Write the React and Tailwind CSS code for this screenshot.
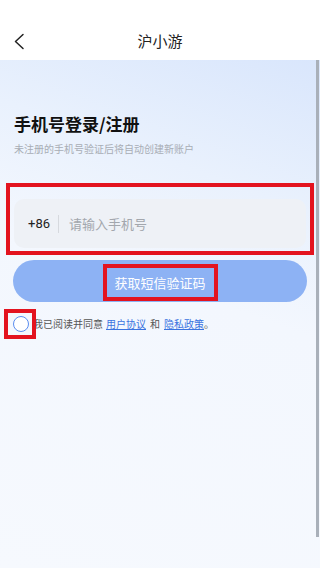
import React from "react";

export default function App() {
  const font = { fontFamily: '"Noto Sans CJK SC", "Noto Sans", Roboto, sans-serif' };
  return (
    <div
      className="relative w-[320px] h-[568px] overflow-hidden flex flex-col bg-white"
      style={font}
    >
      {/* Header */}
      <div className="h-[60px] bg-white shrink-0">
        <div className="relative mt-[26px] h-[30px] flex items-center justify-center">
          <svg
            className="absolute left-[13px] top-[7px]"
            width="12"
            height="17"
            viewBox="0 0 12 17"
            fill="none"
          >
            <path d="M10 1.5 L2.5 8.5 L10 15.5" stroke="#222" strokeWidth="1.5" strokeLinecap="round" strokeLinejoin="round" />
          </svg>
          <span className="text-[15px] text-[#222] leading-[20px]">沪小游</span>
        </div>
      </div>

      {/* Body */}
      <div className="flex-1 bg-[linear-gradient(200deg,#d9e6fc_0%,#e9f1fd_25%,#f3f7fe_45%,#f6f9fe_100%)] flex flex-col">
        <div className="pt-[52px] pl-[14px]">
          <div className="text-[17px] font-bold leading-[24px] text-[#111]">手机号登录/注册</div>
          <div className="mt-[6px] text-[10px] leading-[14px] text-[#a8adb5]">未注册的手机号验证后将自动创建新账户</div>
        </div>

        {/* Input with highlight box */}
        <div className="mt-[27px] ml-[6px] w-[308px] h-[72px] border-4 border-[#e3131f] pt-[12px] pl-[4px] pr-[4px]">
          <div className="h-[49px] rounded-[10px] bg-[#eef1f6] flex items-center pl-[14px]">
            <span className="text-[13px] text-[#222]" style={{ fontFamily: 'Roboto, "Noto Sans", sans-serif' }}>+86</span>
            <span className="ml-[8px] w-px h-[18px] bg-[#d6d9de]" />
            <span className="ml-[10px] text-[13px] text-[#a3a7ad]">请输入手机号</span>
          </div>
        </div>

        {/* Button */}
        <div className="mt-[5px] ml-[13px] w-[294px] h-[42px] rounded-full bg-[#8db2f4] flex items-center justify-center">
          <div className="mt-[3px] w-[115px] h-[37px] border-4 border-[#e3131f] flex items-center justify-center">
            <span className="text-[13px] text-white leading-[18px]">获取短信验证码</span>
          </div>
        </div>

        {/* Agreement */}
        <div className="mt-[7px] flex items-center">
          <div className="relative z-10 ml-[4px] w-[32px] h-[30px] border-4 border-[#e3131f] flex items-center justify-center">
            <div className="ml-[2px] w-[16px] h-[16px] rounded-full border border-[#5b8def] bg-white" />
          </div>
          <div className="-ml-[3px] text-[10px] leading-[14px] text-[#555] flex items-center whitespace-nowrap">
            <span>我已阅读并同意</span>
            <span className="ml-[3px] text-[#3a73e0] underline">用户协议</span>
            <span className="ml-[4px]">和</span>
            <span className="ml-[4px] text-[#3a73e0] underline">隐私政策</span>
            <span>。</span>
          </div>
        </div>
      </div>

      {/* Scrollbar */}
      <div className="absolute right-[1px] top-[60px] w-[3px] h-[477px] bg-[#a9b0ba]" />
    </div>
  );
}
